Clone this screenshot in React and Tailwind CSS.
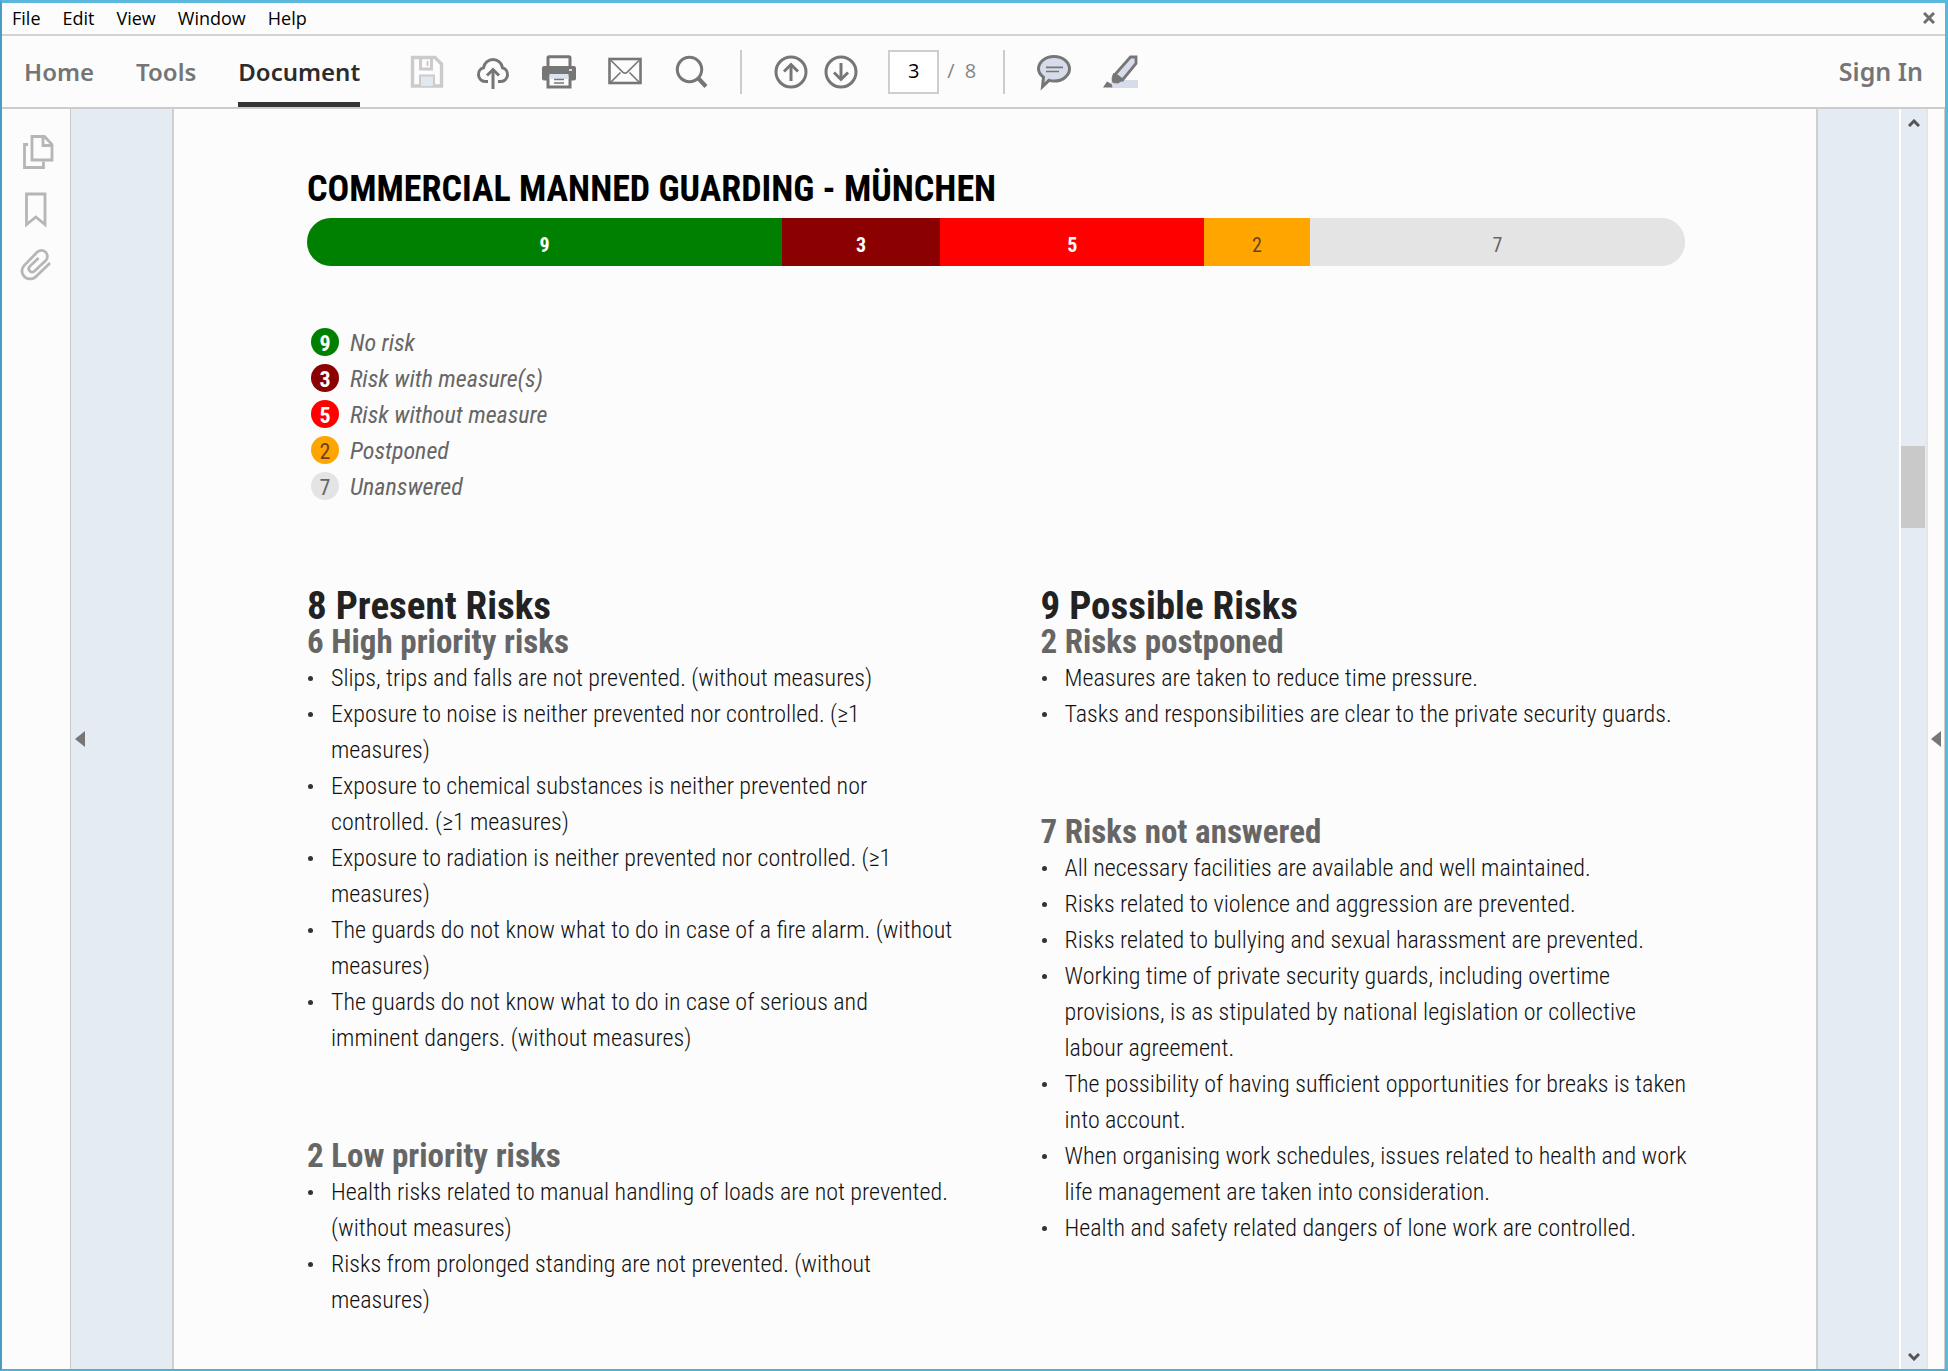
const MENUS = ["File", "Edit", "View", "Window", "Help"];

const SEGMENTS = [
  { count: 9, label: "No risk", tone: "bg-[#008000] text-white font-bold" },
  { count: 3, label: "Risk with measure(s)", tone: "bg-[#8b0000] text-white font-bold" },
  { count: 5, label: "Risk without measure", tone: "bg-[#ff0000] text-white font-bold" },
  { count: 2, label: "Postponed", tone: "bg-[#ffa500] text-[#6b4226]" },
  { count: 7, label: "Unanswered", tone: "bg-[#e4e4e4] text-[#666666]" },
];

const COLUMNS = [
  {
    title: "8 Present Risks",
    groups: [
      {
        title: "6 High priority risks",
        items: [
          "Slips, trips and falls are not prevented. (without measures)",
          "Exposure to noise is neither prevented nor controlled. (≥1 measures)",
          "Exposure to chemical substances is neither prevented nor controlled. (≥1 measures)",
          "Exposure to radiation is neither prevented nor controlled. (≥1 measures)",
          "The guards do not know what to do in case of a fire alarm. (without measures)",
          "The guards do not know what to do in case of serious and imminent dangers. (without measures)",
        ],
      },
      {
        title: "2 Low priority risks",
        items: [
          "Health risks related to manual handling of loads are not prevented. (without measures)",
          "Risks from prolonged standing are not prevented. (without measures)",
        ],
      },
    ],
  },
  {
    title: "9 Possible Risks",
    groups: [
      {
        title: "2 Risks postponed",
        items: [
          "Measures are taken to reduce time pressure.",
          "Tasks and responsibilities are clear to the private security guards.",
        ],
      },
      {
        title: "7 Risks not answered",
        items: [
          "All necessary facilities are available and well maintained.",
          "Risks related to violence and aggression are prevented.",
          "Risks related to bullying and sexual harassment are prevented.",
          "Working time of private security guards, including overtime provisions, is as stipulated by national legislation or collective labour agreement.",
          "The possibility of having sufficient opportunities for breaks is taken into account.",
          "When organising work schedules, issues related to health and work life management are taken into consideration.",
          "Health and safety related dangers of lone work are controlled.",
        ],
      },
    ],
  },
];

function Icon({ children }) {
  return (
    <svg viewBox="0 0 34 34" className="size-[34px] overflow-visible" fill="none" stroke="currentColor" strokeWidth="3" aria-hidden="true">
      {children}
    </svg>
  );
}

function ToolButton({ label, className = "text-[#767676]", children }) {
  return (
    <button type="button" aria-label={label} className={className}>
      <Icon>{children}</Icon>
    </button>
  );
}

function MenuBar() {
  return (
    <div className="flex h-[33px] items-center justify-between border-b-2 border-[#d3d3d3] pr-[10px] pb-0.5 pl-[10px]">
      <div className="flex gap-[22px] text-lg leading-6 text-black">
        {MENUS.map((m) => (
          <button key={m} type="button">{m}</button>
        ))}
      </div>
      <button type="button" aria-label="Close" className="text-[#6e6e6e]">
        <svg viewBox="0 0 12 12" className="size-3" stroke="currentColor" strokeWidth="3" aria-hidden="true">
          <path d="M1 1l10 10M11 1L1 11" />
        </svg>
      </button>
    </div>
  );
}

function Toolbar() {
  return (
    <div className="flex h-[73px] items-center border-b-2 border-[#cccccc] pr-[22px] pl-[22px]">
      <nav className="flex gap-[42px] self-stretch font-['Noto_Sans'] text-2xl font-semibold text-[#757575]">
        <a href="#home" className="flex items-center">Home</a>
        <a href="#tools" className="flex items-center">Tools</a>
        <a href="#document" className="flex items-center border-b-[5px] border-[#333333] pt-[5px] text-[#2c2c2c]">Document</a>
      </nav>

      <div className="ml-[50px] flex gap-8">
        <ToolButton label="Save" className="text-[#cbcbcb]">
          <path d="M2.5 2.5H25L31.5 9V31H2.5z" strokeWidth="3.4" />
          <path d="M10.5 3v11h11V3" />
          <path d="M17.5 6v5" strokeWidth="2" />
          <path d="M10 31V20.5h14V31" strokeWidth="2" fill="#e1e8f2" />
        </ToolButton>
        <ToolButton label="Upload">
          <path d="M12 26.5H9A7 7 0 0 1 7.5 12.8a9.6 9.6 0 0 1 19 0A7 7 0 0 1 25 26.5h-3" />
          <path d="M17 34V15" />
          <path d="M11 20.5l6-6 6 6" />
        </ToolButton>
        <ToolButton label="Print">
          <rect x="6" y="1.7" width="22" height="12" rx="1" />
          <rect x="0" y="11" width="34" height="14.5" rx="2" fill="currentColor" stroke="none" />
          <rect x="6" y="20" width="22" height="12" fill="#fcfcfc" />
          <rect x="7.5" y="19" width="19" height="5" fill="#dde3ee" stroke="none" />
          <path d="M12 24.5h10M12 28h10" strokeWidth="1.6" />
          <path d="M27 15h3" stroke="#fcfcfc" strokeWidth="1.5" />
        </ToolButton>
        <ToolButton label="Email">
          <rect x="1.5" y="4" width="31" height="24" strokeWidth="2.6" />
          <path d="M3 5.5l12 11.8q2 1.6 4 0L31 5.500M3 27l9.5-9.5M31 27l-9.5-9.5" strokeWidth="1.6" />
        </ToolButton>
        <ToolButton label="Find">
          <circle cx="15.5" cy="14.500" r="12.200" />
          <path d="M24 23l8 8.500" strokeWidth="4.200" />
        </ToolButton>
      </div>

      <div className="ml-8 h-11 w-0.5 bg-[#cccccc]" />

      <div className="ml-8 flex gap-4">
        <ToolButton label="Previous page">
          <circle cx="17" cy="17" r="15" />
          <path d="M17 26V10" />
          <path d="M10 16.5l7-7 7 7" />
        </ToolButton>
        <ToolButton label="Next page">
          <circle cx="17" cy="17" r="15" />
          <path d="M17 8v16" />
          <path d="M10 17.5l7 7 7-7" />
        </ToolButton>
      </div>

      <input
        aria-label="Page number"
        defaultValue="3"
        className="ml-[30px] h-11 w-[51px] border-2 border-[#cccfd2] bg-white pb-0.5 text-center text-[20px] text-black"
      />
      <span className="ml-2 pb-0.5 text-[20px] whitespace-pre text-[#858585]">/  8</span>

      <div className="ml-[27px] h-11 w-0.5 bg-[#cccccc]" />

      <div className="ml-8 flex gap-8">
        <ToolButton label="Comment">
          <path d="M17 1.5c8.7 0 15.500 5.500 15.500 12.300S25.700 26 17 26c-1.800 0-3.500-.2-5-.7L5.500 31.500l1-9.300C3.500 20 1.500 17.200 1.500 13.800 1.500 7 8.300 1.500 17 1.500z" fill="#d6dce9" />
          <path d="M9 12.300h17M9 16.500h13" strokeWidth="1.700" />
        </ToolButton>
        <ToolButton label="Highlight">
          <rect x="8" y="25" width="27" height="8" fill="#d6dce9" stroke="none" />
          <path d="M27.500 2h5.500v6.500L19.500 25l-7.500-5.500z" fill="#d6dce9" strokeWidth="2.800" />
          <path d="M10.500 18.500l8.500 7-4 2.500-5-.5-1-4z" fill="currentColor" strokeWidth="1" />
          <path d="M0 32.500l4-6 4.500 2.500 1 3.500z" fill="currentColor" stroke="none" />
        </ToolButton>
      </div>

      <button type="button" className="ml-auto font-['Noto_Sans'] text-[25px] font-semibold text-[#757575]">Sign In</button>
    </div>
  );
}

function Rail() {
  return (
    <aside className="flex w-[69px] shrink-0 flex-col items-center gap-[22px] border-r border-[#c8c8c8] pt-[26px]">
      <ToolButton label="Page thumbnails" className="text-[#b6b6b6]">
        <path d="M9 9.500H5.500V32.500h19v-6" strokeWidth="2.800" />
        <path d="M13 1.500H25.500l7.500 8V25h-20z" strokeWidth="2.800" />
        <path d="M24 2v8.500H32.500" strokeWidth="2.800" />
      </ToolButton>
      <ToolButton label="Bookmarks" className="text-[#b6b6b6]">
        <path d="M7.500 3h18.500v30.500L16.800 26l-9.300 7.500z" strokeWidth="2.800" />
      </ToolButton>
      <ToolButton label="Attachments" className="text-[#b6b6b6]">
        <path d="M31 16L17.300 29.200a8.300 8.300 0 0 1-12.600-.4c-2.600-3-2.300-7.400.4-10.200L18 5.300a6 6 0 0 1 8.800 8.200L15.300 24.200a3.300 3.300 0 0 1-4.700-4.600L19.500 11" strokeWidth="2.800" />
      </ToolButton>
    </aside>
  );
}

function PaneToggle({ label }) {
  return (
    <button type="button" aria-label={label} className="text-[#767676]">
      <svg viewBox="0 0 10 16" className="h-4 w-2.5" fill="currentColor" aria-hidden="true">
        <path d="M0 8l10-8v16z" />
      </svg>
    </button>
  );
}

function Report() {
  return (
    <main
      className="min-w-0 flex-1 border-x-2 border-[#cfcfcf] bg-[#fcfcfc] pt-14 pr-[131px] pb-10 pl-[133px]"
      style={{ fontFamily: "'Roboto Condensed', Roboto, sans-serif" }}
    >
      <h1 className="text-4xl leading-[48px] font-bold text-black">COMMERCIAL MANNED GUARDING - MÜNCHEN</h1>
      <div className="mt-[5px] flex h-12 overflow-hidden rounded-full bg-[#e4e4e4] text-[20px]">
        {SEGMENTS.map((s, i) => (
          <div
            key={s.label}
            className={`flex items-center justify-center pt-1.5 ${s.tone}`}
            style={i === SEGMENTS.length - 1 ? { flex: 1 } : { width: `${s.count * 3.83}%` }}
          >
            {s.count}
          </div>
        ))}
      </div>

      <ul className="mt-[58px] ml-1 text-2xl text-[#666666]">
        {SEGMENTS.map((s) => (
          <li key={s.label} className="flex h-9 items-center gap-[11px]">
            <span className={`flex size-7 items-center justify-center rounded-full pt-1 text-[22px] leading-6 ${s.tone}`}>{s.count}</span>
            <em className="pt-0.5 leading-8">{s.label}</em>
          </li>
        ))}
      </ul>

      <div className="mt-[84px] -mr-[7px] grid grid-cols-2 gap-x-[82px]">
        {COLUMNS.map((col) => (
          <section key={col.title}>
            <h2 className="text-[39px] leading-9 font-bold text-[#222222]">{col.title}</h2>
            <div className="flex flex-col gap-[82px]">
              {col.groups.map((g) => (
                <div key={g.title}>
                  <h3 className="text-[33px] leading-9 font-bold text-[#666666]">{g.title}</h3>
                  <ul className="text-2xl leading-9 font-light text-[#111111]">
                    {g.items.map((t) => (
                      <li key={t} className="flex">
                        <span className="mt-4 mr-[18px] ml-px size-[5px] shrink-0 rounded-full bg-[#333333]" />
                        <span>{t}</span>
                      </li>
                    ))}
                  </ul>
                </div>
              ))}
            </div>
          </section>
        ))}
      </div>
    </main>
  );
}

function ScrollBar() {
  return (
    <div className="flex w-[29px] shrink-0 flex-col items-center border-r-2 border-l-2 border-l-white border-r-[#e5e5e5] pt-[10px] pb-2 text-[#555555]">
      <button type="button" aria-label="Scroll up" className="flex">
        <svg viewBox="0 0 12 8" className="h-2 w-3" fill="none" stroke="currentColor" strokeWidth="3" aria-hidden="true">
          <path d="M1 7l5-5 5 5" />
        </svg>
      </button>
      <div className="flex w-full flex-1 flex-col">
        <div className="grow-[317]" />
        <div className="h-[82px] w-6 bg-[#c9c9c9]" />
        <div className="grow-[820]" />
      </div>
      <button type="button" aria-label="Scroll down" className="flex">
        <svg viewBox="0 0 12 8" className="h-2 w-3" fill="none" stroke="currentColor" strokeWidth="3" aria-hidden="true">
          <path d="M1 1l5 5 5-5" />
        </svg>
      </button>
    </div>
  );
}

export default function App() {
  return (
    <div
      className="flex min-h-screen flex-col border-t-3 border-r-3 border-b-2 border-l-2 border-t-[#5bb8dc] border-r-[#5bb8dc] border-b-[#4fb0d2] border-l-[#4a9cc7] bg-[#fcfcfc]"
      style={{ fontFamily: "'Open Sans', 'Noto Sans', sans-serif" }}
    >
      <MenuBar />
      <Toolbar />
      <div className="flex flex-1">
        <Rail />
        <div className="flex min-w-0 flex-1 bg-[#e4ebf3]">
          <div className="flex w-[101px] shrink-0 items-center pl-1">
            <PaneToggle label="Toggle navigation pane" />
          </div>
          <Report />
          <div className="w-[81px] shrink-0" />
          <ScrollBar />
        </div>
        <div className="flex w-[17px] shrink-0 items-center justify-center border-r border-[#cccccc]">
          <PaneToggle label="Toggle tools pane" />
        </div>
      </div>
    </div>
  );
}
